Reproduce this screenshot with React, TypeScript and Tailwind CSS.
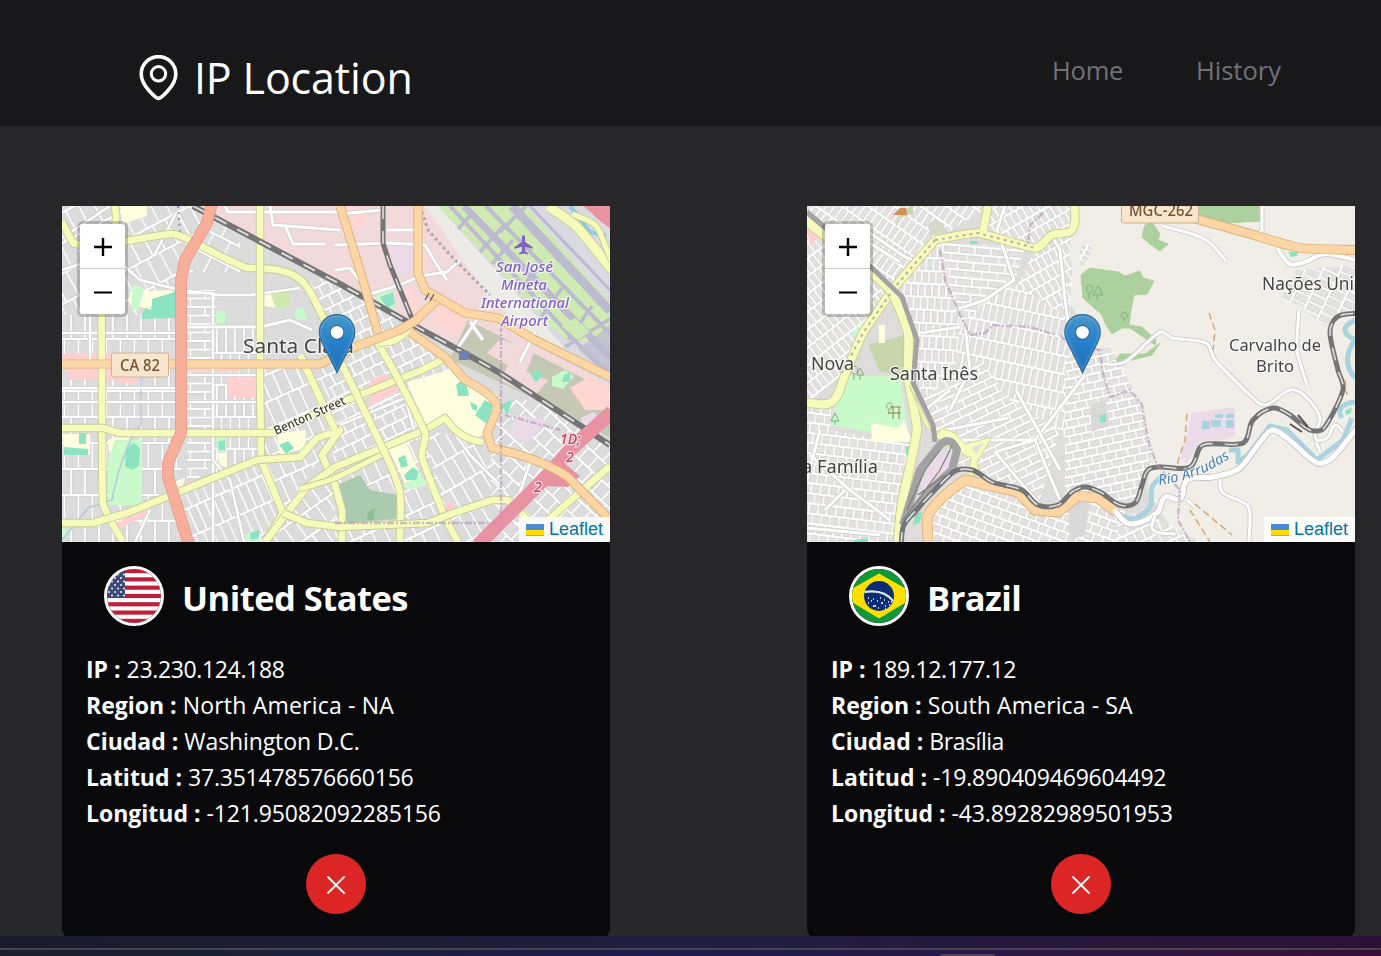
import React from "react";

type Pt = { d: string };

/** Turns polylines (M x y, H, V) into rounded curves; sub-paths that already hold curves are kept. */
function smooth(d: string): string {
  return d
    .split(/(?=M)/)
    .map((sub) => {
      if (/[CQALZz]/.test(sub)) return sub;
      const tokens = sub.match(/[MHV]|-?\d+(?:\.\d+)?/g) ?? [];
      const pts: [number, number][] = [];
      let i = 0;
      while (i < tokens.length) {
        const t = tokens[i];
        const last = pts[pts.length - 1];
        if (t === "M") {
          i += 1;
        } else if (t === "H") {
          pts.push([Number(tokens[i + 1]), last[1]]);
          i += 2;
        } else if (t === "V") {
          pts.push([last[0], Number(tokens[i + 1])]);
          i += 2;
        } else {
          pts.push([Number(t), Number(tokens[i + 1])]);
          i += 2;
        }
      }
      if (pts.length < 3) return sub;
      let out = `M${pts[0][0]} ${pts[0][1]}`;
      for (let k = 0; k < pts.length - 1; k++) {
        const p0 = pts[Math.max(0, k - 1)];
        const p1 = pts[k];
        const p2 = pts[k + 1];
        const p3 = pts[Math.min(pts.length - 1, k + 2)];
        const len = Math.hypot(p2[0] - p1[0], p2[1] - p1[1]);
        const handle = (a: [number, number], b: [number, number]) => {
          const l = Math.hypot(b[0] - a[0], b[1] - a[1]) || 1;
          const m = Math.min(len / 3, 9);
          return [((b[0] - a[0]) / l) * m, ((b[1] - a[1]) / l) * m];
        };
        const [ax, ay] = handle(p0, p2);
        const [bx, by] = handle(p1, p3);
        out += `C${p1[0] + ax} ${p1[1] + ay} ${p2[0] - bx} ${p2[1] - by} ${p2[0]} ${p2[1]}`;
      }
      return out;
    })
    .join("");
}

function Road({ d, w, color, casing, dash }: Pt & { w: number; color: string; casing?: string; dash?: string }) {
  const path = smooth(d);
  return (
    <g fill="none" strokeLinejoin="round" strokeLinecap="butt">
      {casing && <path d={path} stroke={casing} strokeWidth={w + 1.8} />}
      <path d={path} stroke={color} strokeWidth={w} strokeDasharray={dash} />
    </g>
  );
}

const Yellow = ({ d, w = 6.6 }: Pt & { w?: number }) => <Road d={d} w={w} color="#f6fabb" casing="#c9cb98" />;
const Orange = ({ d, w = 7.4 }: Pt & { w?: number }) => <Road d={d} w={w} color="#fcd6a4" casing="#dcb27a" />;
const White = ({ d, w = 3 }: Pt & { w?: number }) => (
  <g fill="none" strokeLinejoin="round">
    <path d={d} stroke="#cfcdca" strokeWidth={w + 1.6} />
    <path d={d} stroke="#ffffff" strokeWidth={w} />
  </g>
);
const Rail = ({ d, w = 5 }: Pt & { w?: number }) => {
  const path = smooth(d);
  return (
    <g fill="none" strokeLinejoin="round">
      <path d={path} stroke="#757575" strokeWidth={w} />
      <path d={path} stroke="#dddddd" strokeWidth={w * 0.33} strokeDasharray="13 12" />
    </g>
  );
};
const River = ({ d, w = 5 }: Pt & { w?: number }) => <Road d={d} w={w} color="#aad3df" />;
const Admin = ({ d }: Pt) => <path d={d} fill="none" stroke="#b494b8" strokeWidth="2.4" strokeDasharray="7 2 2 2" opacity="0.6" />;

function Blocks({ id, d, a, w, h, bg, s = 1.8 }: Pt & { id: string; a: number; w: number; h: number; bg: string; s?: number }) {
  const lines = `M0 1H${w * 2}M0 ${h + 1}H${w * 2}M1 0V${h}M${w + 1} 0V${h}M${w * 0.6} ${h}V${h * 2}M${w * 1.6} ${h}V${h * 2}`;
  return (
    <g>
      <defs>
        <pattern id={id} width={w * 2} height={h * 2} patternUnits="userSpaceOnUse" patternTransform={`rotate(${a})`}>
          <rect width={w * 2} height={h * 2} fill={bg} />
          <path d={lines} stroke="#cccaca" strokeWidth={s + 1} />
          <path d={lines} stroke="#fff" strokeWidth={s} />
        </pattern>
      </defs>
      <path d={d} fill={`url(#${id})`} />
    </g>
  );
}

function Label({ x, y, size, children, fill = "#444", halo = "#ffffffb0", italic, rotate = 0, len, bold }: {
  x: number; y: number; size: number; children: string; fill?: string; halo?: string; italic?: boolean; rotate?: number; len?: number; bold?: boolean;
}) {
  return (
    <text
      x={x}
      y={y}
      fontSize={size}
      fontFamily="Noto Sans, sans-serif"
      fontStyle={italic ? "italic" : "normal"}
      fontWeight={bold ? 500 : 400}
      fill={fill}
      stroke={halo}
      strokeWidth="2.5"
      paintOrder="stroke"
      textLength={len}
      lengthAdjust="spacingAndGlyphs"
      transform={rotate ? `rotate(${rotate} ${x} ${y})` : undefined}
    >
      {children}
    </text>
  );
}

function Marker({ x, y }: { x: number; y: number }) {
  return (
    <g transform={`translate(${x - 18.5} ${y - 59}) scale(1.48)`}>
      <path d="M12.5 .4C5.8 .4.5 5.8.5 12.3c0 2.4.6 4.2 1.7 6.4L12.5 39.7 22.9 18.7c1-2.2 1.6-4 1.6-6.4C24.5 5.8 19.2.4 12.5.4z" fill="url(#pin)" stroke="#2e6c97" strokeWidth="0.8" />
      <path d="M12.5 1.5C6.4 1.5 1.6 6.4 1.6 12.3c0 2.2.5 3.8 1.6 5.9l9.3 19 9.4-19c1-2.1 1.5-3.7 1.5-5.9 0-5.9-4.8-10.8-10.9-10.8z" fill="none" stroke="#fff" strokeOpacity="0.12" />
      <circle cx="12.5" cy="12.4" r="4.7" fill="#fff" stroke="#2e6c97" strokeWidth="0.8" />
    </g>
  );
}

const PinGradient = () => (
  <linearGradient id="pin" x1="0" y1="0" x2="0" y2="1">
    <stop offset="0" stopColor="#4a97ca" />
    <stop offset="0.5" stopColor="#267fca" />
    <stop offset="1" stopColor="#216fb4" />
  </linearGradient>
);

function SantaClaraMap() {
  const g = "#dcdcdc";
  return (
    <svg viewBox="62 206 548 336" className="block h-[336px] w-[548px]">
      <defs><PinGradient /></defs>
      <rect x="62" y="206" width="548" height="336" fill={g} />
      <g className="blur-[0.45px]">
        <Blocks id="u1" d="M62 206H210L181 270 181 364H62z" a={-28} w={14} h={27} bg={g} />
        <Blocks id="u2" d="M62 315H181V542H62z" a={0} w={14} h={26} bg={g} />
        <Blocks id="u3" d="M187 290H216V460L187 490z" a={0} w={34} h={8.5} bg={g} />
        <Blocks id="u3b" d="M214 325H261V460L214 480z" a={0} w={9} h={32} bg={g} />
        <Blocks id="u4" d="M187 245 212 215 240 230V272H187z" a={27} w={19} h={22} bg={g} />
        <Blocks id="u5" d="M168 490 261 460 283 513 265 542H187z" a={-24} w={9} h={27} bg={g} />
        <Blocks id="u6" d="M261 364H330L340 430 283 513 261 460z" a={-24} w={12} h={25} bg={g} />
        <Blocks id="u7" d="M283 513 335 470V542H265z" a={-35} w={13} h={22} bg={g} />
        <Blocks id="u8" d="M310 280 360 277 412 327 460 370 422 440 335 478 325 340z" a={-26} w={11} h={12} bg={g} />
        <Blocks id="u9" d="M335 470 425 430 480 542H335z" a={-25} w={13} h={22} bg={g} />
        <Blocks id="u10" d="M425 430 483 442 550 470 480 542H450z" a={-30} w={12} h={27} bg={g} />
        <Blocks id="u11" d="M492 400 540 400 610 440V542H490z" a={43} w={13} h={15} bg={g} />
        <path d="M200 206H430L500 302 610 380V420L500 380 410 325 340 284z" fill="#f2dadb" />
        <path d="M215 281 260 270 310 284 260 290z" fill={g} />
        <path d="M391 243 415 245V267L398 280z M425 310 447 315 436 327z" fill="#ebdbe8" />
        <path d="M407 285 418 300 412 317z M346 206 367 209 362 229 345 222z M439 306 468 315 455 337 430 320z" fill="#ffd6d1" />
        <path d="M62 354H125V380H70z M106 373H137V383H120z M190 365H240V372H190z M227 378H256V397H227z M115 523 148 510V515L120 528z M370 380 385 373 400 390 370 406z M445 504 454 500 454 515 448 518z" fill="#ffd0cf" />
        <path d="M468 320 610 392V438L570 415 450 359z" fill="#c6c8b6" />
        <path d="M500 339 535 350 525 375 487 353z M508 365 548 380 534 397 500 380z" fill="#f2dadb" />
        <path d="M570 388 590 376 610 388V410H585z" fill="#ffd6d1" />
        <path d="M515 415 548 420 525 444 510 434z M580 418 594 412 606 425 592 438z" fill="#ebdbe8" />

        <path d="M425 206H575L610 240V385L545 350 500 302z" fill="#dadae3" />
        <path d="M425 206H438L565 348 554 352 490 300z" fill="#ecebe5" />
        <path d="M438 206H526L610 302V340L580 342 563 338z" fill="#cfebb3" />
        <g stroke="#bcbbcf" fill="none">
          <path d="M450 206 580 346 610 374" strokeWidth="4" />
          <path d="M464 206 610 357" strokeWidth="7" />
          <path d="M486 206 610 334" strokeWidth="4" />
          <path d="M512 206 610 311" strokeWidth="9" />
          <path d="M530 206 610 290" strokeWidth="3" />
          <path d="M458 229 474 211M480 252 503 226M492 264 513 240M518 292 541 265M541 317 562 288M568 340 592 306M565 347 610 319M500 232 526 206" strokeWidth="3.5" />
        </g>
        <path d="M561 326 578 340 590 332 575 318z" fill="#cfebb3" />
        <path d="M578 349 610 325V378z" fill="#bcbbcf" opacity=".7" />
        <path d="M570 206 590 232 606 236" fill="none" stroke="#90cbe0" strokeWidth="4" />
        <Yellow d="M548 206 577 227 612 270" w={9} />
        <Yellow d="M572 214 595 225 605 245 612 262" w={5} />
        <path d="M583 206H610V228C598 221 592 212 583 206z" fill="#e892a2" />

        <path d="M120 206H147V216L122 224z M130 292 173 290 168 302 145 308 130 304z M265 292 285 290 280 308 264 306z M108 440 133 432 122 450 109 452z M62 434H90V455H65z M118 500 133 492 132 500 118 507z M277 433 306 430 305 448 280 455z M218 453H227V467L219 465z M407 382 450 370 497 395 488 433 470 440 445 418 425 425z M388 448 405 440 425 485 408 490z M166 485 185 478 182 488 170 490z" fill="#ffffe0" />
        <path d="M133 285 144 288 138 312 131 308z M115 440 142 440V505H108V460z M216 435H226V452H217z M295 310 303 307 307 320 296 320z M216 311H225V323H216z M373 294 392 291 395 308 386 310z M552 377 565 370 574 376 563 389 552 386z M402 485 420 475 427 483 410 490z M245 535 256 530 261 542H247z M62 528 72 530 62 542z" fill="#c8facc" />
        <path d="M270 292 289 290V307L276 309z" fill="#cfe8ab" />
        <path d="M152 299 175 292 175 318 141 319 145 308 152 310z M126 448 134 443 140 448 139 466 132 470 125 466z M79 433H86V444H79z M64 447 88 449V455H64z M279 445 288 441 294 448 286 454z M218 442 225 440V450H219z M380 297 393 292 395 304 387 308z M456 385 465 377 469 396 458 396z M475 415 485 400 493 405 488 425z M500 405 512 400 508 415z M530 375 538 369 543 376 536 382z M564 375 570 372 570 382 562 382z M398 458 405 455 408 466 401 468z M404 475 413 467 419 472 416 480 406 480z M250 533 259 530 259 538 251 540z M470 402 477 405 477 411 472 409z" fill="#8be3c1" />
        <path d="M337 485 360 475 370 490 397 495V519L345 523z" fill="#aacbaf" />
        <path d="M368 512 375 508 374 520H367z" fill="#8dc08f" />
        <path d="M141 370V425C128 440 118 470 112 500L88 508 62 540" fill="none" stroke="#b8c6dd" strokeWidth="1.5" />

        <White d="M62 270 80 264M62 238 110 206M120 262 140 280 180 290 220 295 250 295 300 288M181 293H213V542M155 254 175 215" w={2.6} />
        <White d="M225 206 228 212H340M270 206 273 225 340 230M285 225 293 244 325 244M180 327H260L290 320 312 330" />
        <White d="M340 214 383 210M387 230H417M335 245 390 243 425 245 437 265 447 280M335 270 350 268 370 294 400 285 420 276 447 272 460 260M457 349 480 315M483 340 470 322M520 362 535 332" />
        <White d="M90 316V368M62 333H181M62 388H181M62 402H181M191 375H260M187 402H260M213 460 230 480 244 542M135 542 150 510M340 425 405 398 417 440M448 424 470 455 505 490M520 492 530 463" w={2.5} />
        <path d="M420 206 428 230 450 255 490 295" stroke="#b3a8b3" strokeWidth="3" strokeDasharray="3 3" fill="none" />
        <path d="M178 206 180 232" stroke="#8290d4" strokeWidth="2" strokeDasharray="2 4" fill="none" />
        <Yellow d="M115 206 116 220 102 290 102 373 103 503 123 542" />
        <Yellow d="M62 222 73 243C95 250 140 237 170 234 185 233 210 254 247 268 290 267 303 277 312 295L327 325 333 340" />
        <Yellow d="M260 206V373L261 460 283 513 265 542" />
        <Yellow d="M62 428H103L120 433H273L340 403 422 370 448 357" />
        <Yellow d="M62 523H93L127 513 257 460 300 457 317 438 340 430 322 455 335 485 342 510V542" />
        <Yellow d="M265 542 307 487 335 467 425 430 445 418Q460 440 483 442" />
        <Yellow d="M300 489 335 478 385 453" w={5} />
        <Yellow d="M300 355 335 430M330 340 385 453 400 493V542" />
        <Yellow d="M378 343 395 373 425 433 422 457 445 517 458 542" />
        <Yellow d="M283 513 307 523 340 527 428 523 448 515 492 500H508L528 520 560 542" />
        <Yellow d="M548 520 610 466M415 325 395 340 378 343" />
        <Rail d="M383 206V243L390 265 415 326" w={5} />
        <Rail d="M193 206 340 284 415 326 500 373 610 445" w={6} />
        <Road d="M478 545 548 475 570 450 612 412" w={14} color="#e892a2" />
        <path d="M542 478 560 460 580 476 568 487 543 486z" fill="#e892a2" />
        <Orange d="M62 364H320L355 347 400 330 415 321 437 300" />
        <Orange d="M340 206 362 277 378 333" />
        <Orange d="M418 206V273L425 290 465 313 498 318 535 340 612 378" />
        <Orange d="M410 332 445 357 465 380Q495 395 498 408L487 433 492 448Q540 458 568 477L612 522" />
        <Road d="M212 203 207 223 185 260 181 280V433L168 463V477L189 545" w={10} color="#f7af9c" casing="#ec9a88" />
        <Admin d="M501 325V520M335 523 501 523M505 415 560 430" />
        <rect x="459" y="351" width="10" height="9" fill="#7181b0" />
        <path d="M425 300 429 293M430 301 434 294" stroke="#555" strokeWidth="1.2" />
        <path d="M523.5 235c1 0 1.6 1.4 1.6 3v4l7.5 5v1.8l-7.5-2v4.2l3 2.5v1l-4.6-1-4.6 1v-1l3-2.5v-4.2l-7.5 2V247l7.5-5v-4c0-1.6.6-3 1.6-3z" fill="#8461c4" />
        <Label x={496} y={272} size={13.5} italic fill="#8461c4" len={57} bold>San José</Label>
        <Label x={501} y={290} size={13.5} italic fill="#8461c4" len={46} bold>Mineta</Label>
        <Label x={481} y={308} size={13.5} italic fill="#8461c4" len={88} bold>International</Label>
        <Label x={501} y={326} size={13.5} italic fill="#8461c4" len={47} bold>Airport</Label>
        <Label x={243} y={353} size={20} len={111}>Santa Clara</Label>
        <Label x={276} y={435} size={12} rotate={-24} len={77} fill="#333" bold>Benton Street</Label>
        <rect x="111.5" y="353" width="57" height="24" rx="2" fill="#f8e5ce" stroke="#d6b08d" />
        <Label x={120} y={371} size={16} len={40} fill="#725131" halo="none" bold>CA 82</Label>
        <Label x={560} y={444} size={14} italic fill="#c04662" halo="#f5dce1" bold>1D;</Label>
        <Label x={566} y={462} size={14} italic fill="#c04662" halo="#f5dce1" bold>2</Label>
        <Label x={534} y={492} size={14} italic fill="#c04662" halo="#f5dce1" bold>2</Label>
      </g>
      <Marker x={337} y={373} />
    </svg>
  );
}

function BrazilMap() {
  const g = "#e4e2de";
  return (
    <svg viewBox="807 206 548 336" className="block h-[336px] w-[548px]">
      <rect x="807" y="206" width="548" height="336" fill="#f1eee8" />
      <g className="blur-[0.45px]">
        <path d="M807 206H1080L1072 240 1068 300 1100 345 1122 380 1142 405 1152 450 1147 490 1180 542H807z" fill="#dedddc" />
        <Blocks id="b1" d="M807 206H990L935 240 895 290 807 222z" a={35} w={7} h={15} bg={g} />
        <Blocks id="b2" d="M807 225 892 295 842 375 807 403z" a={-38} w={7} h={14} bg={g} />
        <Blocks id="b3" d="M902 285 935 243 945 245 965 345 950 415 920 390z" a={3} w={7} h={13} bg={g} />
        <Blocks id="b4" d="M940 243 1025 245 1010 300 960 325z" a={5} w={16} h={8} bg={g} />
        <Blocks id="b5" d="M983 206H1075L1070 320 1010 300 1035 250 983 233z" a={-30} w={7} h={13} bg={g} />
        <Blocks id="b6" d="M960 325 1010 280 1070 320 1110 360 1070 440 1005 400 950 415z" a={12} w={7} h={18} bg={g} />
        <Blocks id="b7" d="M920 400 980 360 1010 400 1060 430 1040 500 960 470z" a={-25} w={18} h={8} bg={g} />
        <Blocks id="b8" d="M1065 360 1105 335 1142 405 1152 450 1140 500 1065 500z" a={-12} w={12} h={8} bg={g} />
        <Blocks id="b9" d="M807 403 832 400 830 430 915 445 898 542H807z" a={7} w={9} h={10} bg={g} />
        <Blocks id="b10" d="M965 480 1018 492 1060 512 1100 495 1120 515V542H928V517z" a={20} w={10} h={9} bg={g} />
        <Blocks id="b11" d="M1120 510 1160 520 1200 542H1115z" a={-25} w={9} h={12} bg={g} />
        <Blocks id="b12" d="M1296 270 1355 265V310L1325 328 1300 305 1280 300z" a={-65} w={9} h={16} bg={g} />
        <Blocks id="b13" d="M1080 250 1085 242 1094 250 1086 264 1080 266z" a={-60} w={6} h={8} bg={g} />
        <path d="M1072 206H1082L1081 250 1070 260z M1068 300 1080 290 1110 345 1098 350z" fill="#efede8" />
        <path d="M1068 505 1090 500 1085 535 1070 540z M1090 405 1105 400 1110 425 1092 432z" fill="#d9d9d9" />

        <path d="M1198 206H1260V221L1228 223 1200 221z M1145 225 1152 222 1160 234 1158 240 1168 244 1160 251 1151 245 1142 237z M1081 275 1090 268 1118 272 1125 276 1140 271 1143 278 1154 281 1147 294 1134 295 1131 310 1129 325 1142 327 1156 340 1155 345 1130 328 1122 328 1112 334 1106 325 1102 315 1083 298z M1116 360 1120 354 1145 354 1160 343 1152 355 1120 363z" fill="#add19e" stroke="#add19e" strokeLinejoin="round" />
        <path d="M868 345 905 335 910 375 880 372z M895 230 903 210 913 206V214L898 218z" fill="#c8d7ab" />
        <path d="M848 376 900 376 907 425 880 434 830 425 843 380z M852 335 858 325 861 340z" fill="#c8facc" />
        <path d="M928 225Q938 213 947 232L930 236z" fill="#d6d8ca" />
        <path d="M871 423 898 428 904 420 912 442 872 442z M879 325H885V343H879z" fill="#ffffe0" />
        <path d="M807 230 822 234 810 245z" fill="#ffd0cf" />
        <path d="M900 208H906L907 215H893z" fill="#d08f55" />
        <path d="M970 241H978V244H970z M906 447H911V455H906z M915 515 922 511 920 522 913 525z M1100 415 1106 414V422L1100 423z M1288 252 1298 252 1297 256 1291 257z M1345 411 1352 407 1351 413 1346 415z M854 540 868 538V542H854z" fill="#8be3c1" />
        <path d="M1192 413 1235 407V435L1225 440 1200 441 1187 463 1181 459z M920 485 935 457 950 455 948 470 926 490z" fill="#ebdbe8" />
        <path d="M1202 421H1210V429H1202z M1211 420H1221V427H1211z M1215 414H1223V418H1215z M1226 414H1234V418H1226z M1226 420H1234V428H1226z" fill="#aad3df" />

        <White d="M870 233 905 257 918 262M865 240 900 262M1005 206 997 230 1014 280 985 300 955 310M1050 233 1060 250 1065 300 1072 350M920 333 960 327M925 410 950 390M945 430 1008 418M960 440 1035 440 1085 375M995 452 1040 505M995 452 1035 440 1060 500" w={3} />
        <White d="M807 528 880 535M810 455 850 490 890 520M820 430 807 480M825 510 845 490M965 325 970 370 950 410M1016 390 1060 470" w={3} />
        <Road d="M1163 226 1195 235 1210 243 1226 261M1098 364 1125 362 1160 332 1172 338 1206 343 1215 360 1250 395 1265 405 1290 390 1305 396 1320 418 1315 435 1320 452M1299 310 1297 350 1307 385M1262 206V232L1250 235" w={3} color="#fff" casing="#cfcdca" />
        <Road d="M1277 248 1290 264 1305 262 1325 254 1355 260" w={4} color="#fff" casing="#cfcdca" />
        <Yellow d="M988 206 983 232M935 240 978 233 1035 248 1052 235 1072 230 1075 206" w={7.5} />
        <Yellow d="M935 240 895 287 863 333 845 375 832 402 807 403" w={8} />
        <Yellow d="M807 222 872 273 892 293 908 333 908 377 917 430 902 503 898 542" w={8.5} />
        <path d="M909 385 935 437 942 428 955 433 965 444 992 437 977 462 980 475 968 475 971 458 945 445 925 425z" fill="#f6fabb" stroke="#d5d797" />
        <path d="M972 447 984 443 975 455z" fill="#e4e2de" />
        <path d="M935 240 978 233 1035 248M935 240 895 287 863 333 842 373" stroke="#c0abab" strokeWidth="2" strokeDasharray="3 4" fill="none" />
        <g fill="none" stroke="#a3a3a3">
          <path d="M807 212 872 268 902 297 917 340 913 383 933 425 935 442" strokeWidth="5" strokeLinejoin="round" />
          <path d="M903 525 920 470 940 445Q950 435 957 450L952 470 930 490 912 515" strokeWidth="8" />
          <path d="M907 510 925 470 940 450M903 520 940 470 952 446M918 495 945 475" stroke="#7d7d7d" strokeWidth="1.2" />
        </g>
        <Orange d="M928 542 927 517Q935 500 965 480L1018 492 1035 510 1058 512 1078 496 1098 498 1116 512" w={9} />
        <Orange d="M1193 218 1247 233 1300 248 1357 250" w={8} />
        <River d="M1123 516 1133 519 1150 507 1152 487 1163 475M1229 450 1238 450V462L1248 455 1270 426 1287 430 1317 460 1343 440 1352 418M1355 320Q1335 330 1355 340 1340 360 1355 378M1355 402Q1334 405 1342 418" />
        <Road d="M1114 510 1130 524 1157 513 1165 497 1180 499 1187 480 1213 477 1240 468 1270 431 1287 438 1317 463 1333 457 1357 428" w={5} color="#fff" casing="#c6c4c1" />
        <Road d="M1220 480 1222 492 1247 505 1250 515 1249 542M1315 430 1317 440 1328 437 1335 425 1343 432M1155 515 1153 530 1175 534M1187 500 1195 507" w={3} color="#fff" casing="#cfcdca" />
        <Rail d="M901 545 905 523 952 473 972 470 992 482 1022 490 1038 505 1058 505 1072 492 1085 487 1100 492 1120 505 1135 503 1142 485 1148 470 1160 467 1190 467 1203 445 1243 443 1253 420 1273 408 1290 415 1310 430 1324 428 1343 390 1338 370 1330 333 1337 317 1357 313" />
        <path d="M1290 424 1302 432M1298 415 1308 427" stroke="#555" strokeWidth="2" fill="none" />
        <Admin d="M940 250 945 280 960 315 970 335 985 333 993 325 1030 327 1055 335M1060 335 1070 345 1100 350 1102 370 1110 397 1130 390 1142 405 1148 440 1157 465 1180 490 1178 520 1190 542M1043 213 1030 225 1028 245" />
        <path d="M1187 414 1185 440 1177 465M1209 313 1215 330 1213 350M1195 504 1232 535M1190 510 1210 542M1345 380 1347 395" stroke="#d3a97b" strokeWidth="1.5" strokeDasharray="7 4" fill="none" />
        <g fill="none" stroke="#82ad7d" strokeWidth="1">
          <path d="M1089 299V293a3 4 0 1 1 1 0M1097 300V295L1093 295 1098 286 1103 295H1098M1124 322V318a3 3 0 1 1 1 0M854 380V374a3 4 0 1 1 1 0M860 380V375L857 375 860 368 864 375H860M835 425V421L831 421 835 413 839 421H835M889 414V409a3 3 0 1 1 1 0" />
          <path d="M890 407h11M893 407v12M899 407v12M888 413h13" stroke="#9b8450" />
        </g>
        <rect x="1121.5" y="195" width="77" height="28" rx="2" fill="#f8e5ce" stroke="#d6b08d" />
        <Label x={1129} y={216} size={15.5} len={64} fill="#725131" halo="none" bold>MGC-262</Label>
        <Label x={1262} y={290} size={18} len={92}>Nações Uni</Label>
        <Label x={1229} y={351} size={16} len={92}>Carvalho de</Label>
        <Label x={1256} y={372} size={16} len={38}>Brito</Label>
        <Label x={811} y={370} size={17.5} len={43}>Nova</Label>
        <Label x={890} y={380} size={18} len={88}>Santa Inês</Label>
        <Label x={802} y={473} size={17.5} len={76}>a Família</Label>
        <defs><path id="arrudas" d="M1159 485Q1200 480 1233 456" /></defs>
        <text fontSize="14.5" fontStyle="italic" fontFamily="Noto Sans, sans-serif" fill="#4d80b3" stroke="#fff8" strokeWidth="2" paintOrder="stroke">
          <textPath href="#arrudas" textLength="77">Rio Arrudas</textPath>
        </text>
      </g>
      <Marker x={1082.5} y={373} />
    </svg>
  );
}

function UsFlag() {
  return (
    <svg viewBox="0 0 54 54" className="h-full w-full">
      <rect width="54" height="54" fill="#fff" />
      {[0, 1, 2, 3, 4, 5, 6].map((i) => (
        <rect key={i} y={i * 8.3} width="54" height="4.15" fill="#bf1e36" />
      ))}
      <rect width="18" height="29" fill="#3c4a76" />
      {[0, 1, 2, 3, 4, 5, 6, 7].map((r) =>
        [0, 1, 2].map((c) => <circle key={`${r}-${c}`} cx={2 + c * 6 + (r % 2) * 3} cy={2 + r * 3.5} r="0.95" fill="#fff" />)
      )}
    </svg>
  );
}

function BrazilFlag() {
  return (
    <svg viewBox="0 0 54 54" className="h-full w-full">
      <rect width="54" height="54" fill="#109739" />
      <path d="M27 4.5 54.5 20V33L27 49.5-.5 33V20z" fill="#fedf00" />
      <circle cx="27" cy="27" r="15" fill="#0b2b74" />
      <path d="M12.5 23Q32 20 41 32" fill="none" stroke="#d9eee4" strokeWidth="2.2" />
      <path d="M16 29h1m2 3h1m-4 2h1m4-4h1m-1 7h1m3-5h1m0 7h1m1-10h1m0 5h2m1-3h1m0 6h1m2-4h1m0 3h1m1-3h1m-7 7h1m-12-3h2" stroke="#fff" strokeWidth="1.3" />
    </svg>
  );
}

type Entry = {
  country: string;
  titleClass: string;
  map: React.ReactNode;
  flag: React.ReactNode;
  rows: [string, string, string][];
};

const entries: Entry[] = [
  {
    country: "United States",
    titleClass: "tracking-[-0.52px]",
    map: <SantaClaraMap />,
    flag: <UsFlag />,
    rows: [
      ["IP :", "23.230.124.188", "tracking-[-0.35px]"],
      ["Region :", "North America - NA", "tracking-[0.2px]"],
      ["Ciudad :", "Washington D.C.", "tracking-[-0.1px]"],
      ["Latitud :", "37.351478576660156", "tracking-[-0.23px]"],
      ["Longitud :", "-121.95082092285156", "tracking-[-0.15px]"],
    ],
  },
  {
    country: "Brazil",
    titleClass: "tracking-[-0.55px]",
    map: <BrazilMap />,
    flag: <BrazilFlag />,
    rows: [
      ["IP :", "189.12.177.12", "tracking-[-0.4px]"],
      ["Region :", "South America - SA", "tracking-[0.1px]"],
      ["Ciudad :", "Brasília", "tracking-[-0.45px]"],
      ["Latitud :", "-19.890409469604492", "tracking-[-0.2px]"],
      ["Longitud :", "-43.89282989501953", "tracking-[-0.15px]"],
    ],
  },
];

function ZoomControl() {
  return (
    <div className="absolute top-[15px] left-[15px] rounded-[6px] border-[3px] border-black/20 bg-clip-padding">
      <div className="flex w-[45px] flex-col overflow-hidden rounded-[3px] bg-white">
        <button className="flex h-[45px] items-center justify-center border-b border-[#ccc] pt-[2px]" aria-label="Zoom in">
          <svg width="18" height="18" viewBox="0 0 18 18"><path d="M0 9H18M9 0V18" stroke="#000" strokeWidth="2.4" /></svg>
        </button>
        <button className="flex h-[45px] items-center justify-center pt-px" aria-label="Zoom out">
          <svg width="18" height="18" viewBox="0 0 18 18"><path d="M0 9.5H18" stroke="#000" strokeWidth="2" /></svg>
        </button>
      </div>
    </div>
  );
}

function Card({ entry }: { entry: Entry }) {
  return (
    <article className="h-[734px] w-[548px] overflow-hidden rounded-b-[12px] bg-[#09090b]">
      <div className="relative h-[336px] overflow-hidden">
        {entry.map}
        <ZoomControl />
        <div className="absolute right-0 bottom-0 flex h-[25px] items-center gap-[5px] bg-white/80 pr-[7px] pl-[7px] font-['Liberation_Sans',sans-serif] text-[18px] text-[#0078a8]">
          <svg width="18" height="12" viewBox="0 0 18 12">
            <rect width="18" height="6" fill="#4a8ad8" />
            <rect y="6" width="18" height="6" fill="#ffdc00" />
            <rect y="11" width="18" height="1" fill="#d9a900" />
          </svg>
          <span>Leaflet</span>
        </div>
      </div>
      <div className="flex items-center gap-[18px] pt-6 pl-[42px]">
        <div className="h-[60px] w-[60px] overflow-hidden rounded-full border-[3px] border-white">{entry.flag}</div>
        <h2 className={`pt-1 text-[34.5px] leading-[48px] font-bold ${entry.titleClass}`}>{entry.country}</h2>
      </div>
      <dl className="mt-[25px] pl-6 text-[23px] leading-9">
        {entry.rows.map(([k, v, spacing]) => (
          <div key={k} className="flex gap-[6px] whitespace-nowrap">
            <dt className="font-bold">{k}</dt>
            <dd className={spacing}>{v}</dd>
          </div>
        ))}
      </dl>
      <div className="mt-[23px] flex justify-center">
        <button className="flex h-[60px] w-[60px] items-center justify-center rounded-full bg-[#dc2626]" aria-label="Delete">
          <svg width="20" height="20" viewBox="0 0 20 20" className="mt-[2px]"><path d="M2 2 18 18M18 2 2 18" stroke="#fff" strokeWidth="1.8" strokeLinecap="round" /></svg>
        </button>
      </div>
    </article>
  );
}

export default function App() {
  return (
    <div className="flex h-[956px] w-[1381px] flex-col overflow-hidden bg-[#27272a] font-['Open_Sans','Noto_Sans',sans-serif] text-white">
      <header className="flex h-[126px] shrink-0 items-start justify-between bg-[#18181b] pr-[100px] pl-[139px]">
        <div className="flex items-center gap-4 pt-[46px]">
          <svg width="39" height="46" viewBox="0 0 39 46" fill="none" stroke="#fff">
            <path d="M19.5 43.5C17 43 2.2 31 2.2 19A17.3 17.3 0 0 1 36.8 19C36.8 31 22 43 19.5 43.5z" strokeWidth="3.6" />
            <circle cx="19.5" cy="18.8" r="7.2" strokeWidth="3" />
          </svg>
          <h1 className="text-[43px] leading-[64px] tracking-[-0.15px]">IP Location</h1>
        </div>
        <nav className="flex gap-[73px] pt-[50px] text-[25.5px] leading-[40px] text-[#71717a]">
          <a className="tracking-[-0.3px]">Home</a>
          <a>History</a>
        </nav>
      </header>
      <main className="flex h-[810px] shrink-0 gap-[197px] overflow-hidden pt-20 pl-[62px]">
        {entries.map((e) => (
          <Card key={e.country} entry={e} />
        ))}
      </main>
      <footer className="h-5 shrink-0 bg-linear-to-r from-[#1b1b2b] via-[#1e1e3f] to-[#2d1038]">
        <div className="mt-3 h-[2px] bg-[#48434f]" />
        <div className="flex h-[6px] items-end bg-linear-to-r from-[#19222c] via-[#1b1c4d] to-[#390f38] pl-[940px]">
          <div className="h-[2px] w-[55px] rounded-t bg-[#52405a]" />
        </div>
      </footer>
    </div>
  );
}
